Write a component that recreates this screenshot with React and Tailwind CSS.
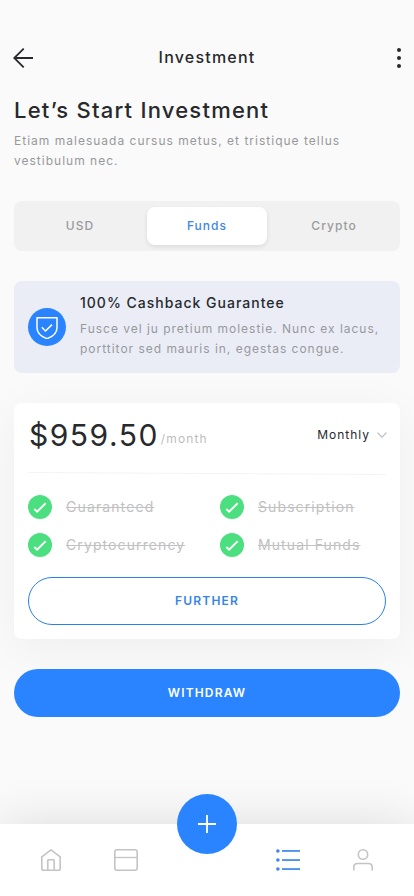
const TABS = ["USD", "Funds", "Crypto"];

const FEATURES = ["Guaranteed", "Subscription", "Cryptocurrency", "Mutual Funds"];

function ArrowLeft() {
  return (
    <svg width="20" height="20" viewBox="0 0 20 20" fill="none" stroke="#27292c" strokeWidth="1.8">
      <path d="M20 10H1M10.7 .6L1.2 10l9.5 9.4" />
    </svg>
  );
}

function MoreDots() {
  return (
    <svg width="4" height="20" viewBox="0 0 4 20" fill="#27292c">
      <circle cx="2" cy="2" r="2" />
      <circle cx="2" cy="10" r="2" />
      <circle cx="2" cy="18" r="2" />
    </svg>
  );
}

function ShieldIcon() {
  return (
    <svg width="22" height="22" viewBox="0 0 22 22" fill="none" stroke="white" strokeWidth="1.5">
      <path d="M1 .8h20v9.7c0 5-3.8 9-10 11.1C4.8 19.5 1 15.5 1 10.5z" strokeLinejoin="round" />
      <path d="M5.8 10.3l3.7 3.7 6.5-6.4" />
    </svg>
  );
}

function CheckCircle() {
  return (
    <svg width="24" height="24" viewBox="0 0 24 24" fill="none" className="shrink-0">
      <circle cx="12" cy="12" r="12" fill="#4bdf80" />
      <path d="M6.3 14l2.8 2.7 8.6-8.6" stroke="white" strokeWidth="2" />
    </svg>
  );
}

function HomeIcon() {
  return (
    <svg width="20" height="22" viewBox="0 0 20 22" fill="none" stroke="#c4c4c4" strokeWidth="1.6" strokeLinejoin="round">
      <path d="M.8 7.8L10 .9l9.2 6.900v11.600a1.800 1.800 0 0 1-1.800 1.800H2.600a1.800 1.800 0 0 1-1.800-1.800z" />
      <path d="M6.8 21V11.500a.8.8 0 0 1 .8-.8h4.800a.8.8 0 0 1 .8.8V21" />
    </svg>
  );
}

function CardIcon() {
  return (
    <svg width="24" height="22" viewBox="0 0 24 22" fill="none" stroke="#c4c4c4" strokeWidth="1.6">
      <rect x=".8" y=".8" width="22.4" height="20.4" rx="2.2" />
      <path d="M1 8.500h22" strokeWidth="1.3" />
    </svg>
  );
}

function ListIcon() {
  return (
    <svg width="24" height="22" viewBox="0 0 24 22" fill="#3b87ea">
      <circle cx="1.9" cy="2" r="1.8" />
      <circle cx="1.9" cy="11" r="1.8" />
      <circle cx="1.9" cy="20" r="1.8" />
      <rect x="6" y="1.1" width="18" height="1.7" />
      <rect x="6" y="10.2" width="18" height="1.7" />
      <rect x="6" y="19.2" width="18" height="1.7" />
    </svg>
  );
}

function UserIcon() {
  return (
    <svg width="20" height="22" viewBox="0 0 20 22" fill="none" stroke="#c4c4c4" strokeWidth="1.6">
      <circle cx="10" cy="5.5" r="4.7" />
      <path d="M.8 21.500v-3.200c0-2.300 1.400-3.800 3.700-3.800h11c2.300 0 3.700 1.500 3.700 3.800v3.200" />
    </svg>
  );
}

export default function App() {
  return (
    <div className="flex h-[896px] w-[414px] flex-col overflow-hidden bg-[#fafafa] font-['Inter','Liberation_Sans',sans-serif] text-[#27292c]">
      {/* Header */}
      <header className="mt-12 grid h-5 shrink-0 grid-cols-[1fr_auto_1fr] items-center px-[13px]">
        <ArrowLeft />
        <h1 className="-mt-0.5 text-base leading-5 font-medium tracking-[1.2px]">Investment</h1>
        <div className="flex justify-end">
          <MoreDots />
        </div>
      </header>

      <main className="flex flex-1 flex-col px-3.5">
        <h2 className="mt-[27px] text-[22px] leading-[30px] font-medium tracking-[1.23px]">
          Let’s Start Investment
        </h2>
        <p className="mt-1.5 text-xs leading-5 tracking-[1.01px] whitespace-nowrap text-[#97999b]">
          Etiam malesuada cursus metus, et tristique tellus
          <br />
          vestibulum nec.
        </p>

        {/* Tabs */}
        <div className="mt-[30px] grid h-[50px] grid-cols-3 items-center gap-[7px] rounded-lg bg-[#f1f1f1] p-1.5">
          {TABS.map((tab) => (
            <button
              key={tab}
              className={
                tab === "Funds"
                  ? "h-[38px] rounded-lg bg-white text-xs font-medium tracking-[1.03px] text-[#3d87e8] shadow-[0_2px_5px_rgba(0,0,0,0.09)]"
                  : "h-[38px] text-xs font-medium tracking-[1.03px] text-[#999b9d]"
              }
            >
              {tab}
            </button>
          ))}
        </div>

        {/* Guarantee banner */}
        <section className="mt-[30px] flex h-[92px] items-center rounded-lg bg-[#eaedf6] pl-3.5">
          <div className="flex size-[38px] shrink-0 items-center justify-center rounded-full bg-[#2a84ff] pt-px">
            <ShieldIcon />
          </div>
          <div className="-mt-0.5 ml-3.5 whitespace-nowrap">
            <h3 className="text-sm leading-5 font-medium tracking-[1px]">100% Cashback Guarantee</h3>
            <p className="mt-1.5 text-xs leading-5 tracking-[0.98px] text-[#97999d]">
              Fusce vel ju pretium molestie. Nunc ex lacus,
              <br />
              porttitor sed mauris in, egestas congue.
            </p>
          </div>
        </section>

        {/* Plan card */}
        <section className="mt-[30px] h-[236px] rounded-lg bg-white px-3.5 shadow-[0_10px_50px_rgba(0,0,0,0.05)]">
          <div className="flex h-[70px] items-center justify-between">
            <div className="-mt-[7px] flex items-end pl-px">
              <span className="text-[30px] leading-9 font-normal tracking-[1.5px]">$959.50</span>
              <span className="mb-1.5 ml-0.5 text-xs leading-4 tracking-[1.13px] text-[#bdbdbd]">/month</span>
            </div>
            <button className="-mr-px flex items-center gap-[7px] pb-1.5 text-xs tracking-[1px]">
              Monthly
              <svg width="10" height="6" viewBox="0 0 10 6" fill="none" stroke="#bdbdbd" strokeWidth="1.3">
                <path d="M.5.6L5 5.1 9.5.6" />
              </svg>
            </button>
          </div>
          <div className="h-px rotate-[0.3deg] bg-[#f4f4f4]" />

          <ul className="mt-[21px] grid grid-cols-[192px_1fr] gap-y-3.5">
            {FEATURES.map((feature) => (
              <li key={feature} className="flex h-6 items-center gap-3.5 whitespace-nowrap">
                <CheckCircle />
                <span className="text-sm tracking-[1.1px] text-[#c1c1c1] line-through">
                  {feature}
                </span>
              </li>
            ))}
          </ul>

          <button className="mt-5 h-12 w-full rounded-full border border-[#2a7fe9] text-xs font-semibold tracking-[1.2px] text-[#3684e6]">
            FURTHER
          </button>
        </section>

        <button className="relative mt-[30px] h-12 rounded-full bg-[#2a84ff] text-xs font-semibold tracking-[1.18px] text-white">
          WITHDRAW
        </button>
      </main>

      {/* Bottom navigation */}
      <nav className="relative flex h-[72px] shrink-0 items-center bg-white pl-[41px] shadow-[0_0_50px_rgba(0,0,0,0.12)]">
        <HomeIcon />
        <div className="ml-[53px]">
          <CardIcon />
        </div>
        <button className="absolute -top-[30px] left-[177px] flex size-[60px] items-center justify-center rounded-full bg-[#2a84ff]">
          <svg width="18" height="18" viewBox="0 0 18 18" stroke="white" strokeWidth="1.8">
            <path d="M0 9h18M9 0v18" />
          </svg>
        </button>
        <div className="ml-[138px]">
          <ListIcon />
        </div>
        <div className="ml-[53px]">
          <UserIcon />
        </div>
      </nav>
    </div>
  );
}
